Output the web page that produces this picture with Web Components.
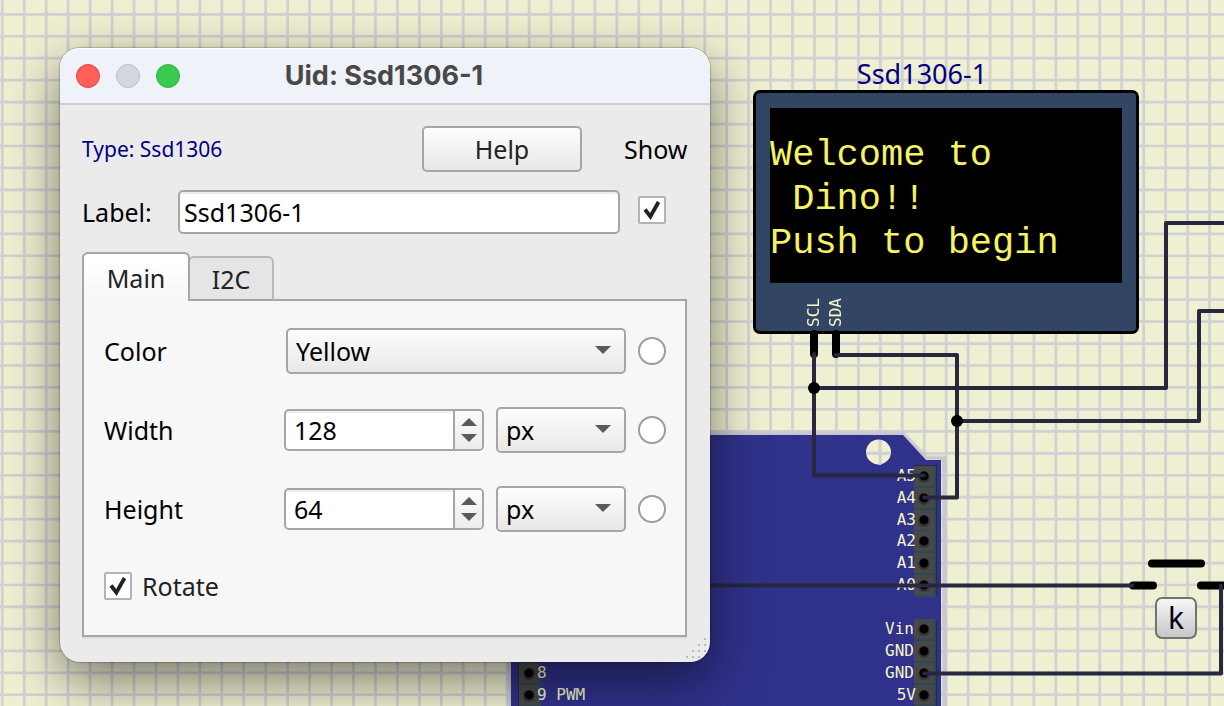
<!DOCTYPE html>
<html lang="en">
<head>
<meta charset="utf-8">
<title>Circuit editor</title>
<style>
  html, body { margin: 0; height: 100%; }
  body { overflow: hidden; font-family: "Noto Sans", "Open Sans", sans-serif; font-size: 25px; color: #000; --edge: #a6a6a6; }
  oled-display { left: 753px; top: 60px; }
  uno-board { left: 506px; top: 430px; }
  push-key { left: 1155px; top: 597px; }
  property-dialog { left: 60px; top: 48px; }
</style>
</head>
<body>
<circuit-canvas>
  <uno-board></uno-board>
  <oled-display name="Ssd1306-1"></oled-display>
  <circuit-wires></circuit-wires>
  <push-key>k</push-key>
  <property-dialog heading="Uid: Ssd1306-1">
    <property-header></property-header>
    <tab-panel>
      <select-row label="Color" value="Yellow"></select-row>
      <number-row label="Width" value="128" unit="px"></number-row>
      <number-row label="Height" value="64" unit="px"></number-row>
      <check-box label="Rotate"></check-box>
    </tab-panel>
  </property-dialog>
</circuit-canvas>

<script>
const define = (name, render, setup) => customElements.define(name, class extends HTMLElement {
  connectedCallback() {
    if (this.shadowRoot) return;
    this.attachShadow({ mode: 'open' }).innerHTML = render(this);
    if (setup) setup(this.shadowRoot, this);
  }
});

const controls = `
  *, *::before { box-sizing: border-box; }
  input, select, button { font: inherit; color: inherit; margin: 0; outline: none; }
  .raised { background: linear-gradient(#fdfdfd, #e8e8e8); border: 2px solid var(--edge); border-radius: 5px; }
  .sunken { background: #fff; border: 2px solid var(--edge); border-radius: 5px; box-shadow: inset 0 2px #ededed; }
  .combo { position: relative; display: block; }
  .combo select { appearance: none; width: 100%; height: 46px; padding: 0 8px; display: block; }
  .combo svg { position: absolute; right: 15px; top: 18px; pointer-events: none; }
  input[type=radio] { appearance: none; width: 28px; height: 28px; border: 2px solid #9d9d9d; border-radius: 50%; background: #fff; }
  input[type=checkbox] { appearance: none; flex: none; width: 28px; height: 28px; border: 2px solid #b4b4b4; border-radius: 2px; background: #fff; display: grid; place-content: center; }
  .tick { position: relative; display: grid; }
  .tick svg { position: absolute; inset: 0; pointer-events: none; }
  .tick input:not(:checked) + svg { display: none; }
`;
const down = '<svg width="16" height="9" aria-hidden="true"><path d="M0 0h16L8 8z" fill="#5a5a5a"/></svg>';
const up = '<svg width="16" height="9" aria-hidden="true"><path d="M0 8h16L8 0z" fill="#5a5a5a"/></svg>';
const tick = '<svg width="28" height="28" aria-hidden="true"><path d="M7 13.500L12.4 20.500L20.5 6" fill="none" stroke="#222" stroke-width="3.8"/></svg>';

/* Schematic sheet: grid lines every 439/20 px */
define('circuit-canvas', () => `
  <style>
    :host { display: block; position: relative; width: 100%; height: 100vh; overflow: hidden; background: #efefd1; }
    svg { position: absolute; inset: 0; width: 100%; height: 100%; }
    ::slotted(*) { position: absolute; }
  </style>
  <svg aria-hidden="true"><path fill="none" stroke="#d1d0d3" stroke-width="2.7"/></svg>
  <slot></slot>`, root => {
  const pitch = 439 / 20, w = screen.width + 2000, h = screen.height + 2000;
  let d = '';
  for (let x = 2.3; x < w; x += pitch) d += `M${x} 0V${h}`;
  for (let y = 14.3; y < h; y += pitch) d += `M0 ${y}H${w}`;
  root.querySelector('path').setAttribute('d', d);
});

define('circuit-wires', () => `
  <style>
    :host { display: block; inset: 0; pointer-events: none; }
    svg { width: 100%; height: 100%; display: block; }
  </style>
  <svg fill="none" stroke-linecap="round" aria-hidden="true">
    <path stroke="#000" stroke-width="8" d="M814 334V354M836 334V354M1133 585.5H1153M1201 585.5H1240M1152 563.5H1201"/>
    <g stroke="#27273d" stroke-width="4" stroke-linejoin="round">
      <path d="M814 354V475.5H924M814 388H1166V223H2400"/>
      <path d="M836 355H957V497.5H924M957 421H1199V311H2400"/>
      <path d="M600 585.5H1132M924 673.5H1221V585.5"/>
    </g>
    <g fill="#000"><circle cx="814" cy="388" r="6"/><circle cx="957" cy="421" r="6"/></g>
  </svg>`);

define('push-key', () => `
  <style>
    :host { display: block; }
    button { display: grid; place-content: center; width: 42px; height: 42px; padding: 0; font: inherit; font-size: 30px; line-height: 36px; color: #000014;
      background: linear-gradient(#f7f7f7, #c6c6c6); border: 2px solid #737373; border-radius: 7px; box-sizing: border-box; }
  </style>
  <button type="button"><slot></slot></button>`);

define('oled-display', el => `
  <style>
    :host { display: grid; justify-items: center; width: 386px; }
    .name { color: #000080; font-size: 27px; line-height: 28px; padding-bottom: 2px; margin-right: 48px; }
    .case { box-sizing: border-box; width: 100%; height: 244px; border: 3px solid #000; border-radius: 7px; background: #324563; padding: 15px 14px; }
    .screen { margin: 0; height: 175px; padding-top: 25px; box-sizing: border-box; background: #000; color: #f5f263; font: 37px/44px "Liberation Mono", monospace; overflow: hidden; }
    .pins { display: flex; gap: 2px; padding: 13px 0 0 34px; font: 16px/20px "DejaVu Sans Mono", monospace; color: #f5f5cd; }
    .pins span { writing-mode: vertical-rl; transform: rotate(180deg); height: 31px; text-align: left; }
  </style>
  <div class="name">${el.getAttribute('name')}</div>
  <div class="case">
    <pre class="screen">Welcome to
 Dino!!
Push to begin</pre>
    <div class="pins"><span>SCL</span><span>SDA</span></div>
  </div>`);

define('uno-board', () => {
  const right = [['A5', 46], ['A4', 68], ['A3', 90], ['A2', 111], ['A1', 133], ['A0', 155], ['Vin', 199], ['GND', 221], ['GND', 243], ['5V', 265]];
  const left = [['8', 243], ['9 PWM', 265]];
  const socket = (x, y) => `<path d="M${x - 10} ${y - 10}h20v20h-20z" fill="#484848"/><path d="M${x - 10} ${y + 11}h21v-21" fill="none" stroke="#2c535c" stroke-width="1.5"/><circle cx="${x}" cy="${y + 1}" r="6" fill="#363636"/><circle cx="${x}" cy="${y}" r="4.500" fill="#000"/>`;
  return `
  <style>:host { display: block; } svg { display: block; font: 16px "DejaVu Sans Mono", monospace; }</style>
  <svg width="450" height="400">
    <defs><filter id="soft" x="-5%" y="-5%" width="110%" height="110%"><feGaussianBlur stdDeviation="1"/></filter></defs>
    <path d="M4 500V4H397L420 28H438V500" fill="none" stroke="#c4c4d0" stroke-width="4" filter="url(#soft)"/>
    <path fill-rule="evenodd" fill="#30318a" d="M5 400V5H397L420 30H435V400ZM360 22A12.500 12.500 0 1 0 385 22A12.500 12.500 0 1 0 360 22Z"/>
    <path d="M374 10v25M361 23h24" stroke="#d1d0d3" stroke-width="2.700"/>
    <path d="M408 35h23v131h-23zM408 191h23v209h-23z" fill="#29293d"/>
    <path d="M12 233h22v167H12z" fill="#29293d"/>
    ${right.map(([, y]) => socket(418, y)).join('')}
    ${left.map(([, y]) => socket(23, y)).join('')}
    <g fill="#f5f5c8">
      ${right.map(([t, y]) => `<text x="${t.length === 3 ? 408 : 410}" y="${y + 5}" text-anchor="end">${t}</text>`).join('')}
      ${left.map(([t, y]) => `<text x="31" y="${y + 5}">${t}</text>`).join('')}
    </g>
  </svg>`;
});

define('property-dialog', el => `
  <style>
    :host { display: block; width: 650px; background: #ebebeb; border-radius: 20px; box-sizing: border-box;
      box-shadow: 0 0 1px 1px #0003, 0 18px 52px #00000080; }
    header { display: grid; grid-template-columns: 1fr auto 1fr; align-items: center; height: 57px; box-sizing: border-box; padding: 0 18px 0 16px;
      background: #eff2f8; border-bottom: 2px solid #cbcdd1; border-radius: 20px 20px 0 0; box-shadow: inset 0 1px #fff; }
    .lights { display: flex; gap: 16px; }
    .lights button { width: 24px; height: 24px; padding: 0; border-radius: 50%; border: 1px solid #e2463f; background: #ff5f58; }
    .lights button:nth-child(2) { border-color: #bcbfc4; background: #d4d7db; }
    .lights button:nth-child(3) { border-color: #2eb244; background: #3ac94f; }
    h1 { margin: 0; font: bold 27px/30px Inter, sans-serif; color: #484848; }
    main { padding: 21px 23px 25px 22px; }
    .grip { position: absolute; right: 4px; bottom: 4px; }
  </style>
  <header>
    <div class="lights"><button type="button" aria-label="Close"></button><button type="button" aria-label="Minimize"></button><button type="button" aria-label="Zoom"></button></div>
    <h1>${el.getAttribute('heading')}</h1>
  </header>
  <main><slot></slot></main>
  <svg class="grip" width="20" height="20" aria-hidden="true"><path fill="#b9b9b9" d="M18 0h2v2h-2zM12 6h2v2h-2zM18 6h2v2h-2zM6 12h2v2H6zM12 12h2v2h-2zM18 12h2v2h-2zM0 18h2v2H0zM6 18h2v2H6zM12 18h2v2h-2z"/></svg>`);

define('property-header', () => `
  <style>${controls}
    :host { display: grid; gap: 18px; margin-bottom: 18px; }
    .row { display: flex; align-items: center; }
    .type { flex: 1; font-size: 21px; color: #000080; }
    .help { width: 160px; height: 46px; padding: 0; color: #222; margin-right: 42px; }
    .show { width: 63px; white-space: nowrap; }
    .label { width: 96px; }
    .name { flex: 1; min-width: 0; height: 44px; padding: 0 4px; margin-right: 18px; }
    .tick { margin: 0 21px 4px 0; }
  </style>
  <div class="row"><span class="type">Type: Ssd1306</span><button class="raised help" type="button">Help</button><label class="show" for="show">Show</label></div>
  <div class="row"><label class="label" for="name">Label:</label><input class="sunken name" id="name" value="Ssd1306-1"><span class="tick"><input type="checkbox" id="show" checked>${tick}</span></div>`);

define('tab-panel', () => `
  <style>
    :host { display: block; }
    * { box-sizing: border-box; }
    nav { display: flex; align-items: flex-end; height: 49px; margin-bottom: -2px; position: relative; }
    button { font: inherit; color: #222; margin: 0; padding: 0; border: 2px solid #b9b9b9; border-radius: 6px 6px 0 0; background: #e5e5e5; height: 45px; width: 86px; margin-left: -2px; border-bottom-color: var(--edge); }
    button:first-child { width: 108px; height: 49px; margin: 0; border-color: var(--edge); border-bottom: 0; background: linear-gradient(#fff, #f7f7f7); z-index: 1; }
    section { display: grid; grid-template-columns: minmax(0, 1fr); gap: 33px; padding: 27px 19px 28px 20px; background: #f7f7f7; border: 2px solid var(--edge); box-shadow: 0 2px #dedede; }
  </style>
  <nav role="tablist"><button role="tab" aria-selected="true">Main</button><button role="tab" aria-selected="false">I2C</button></nav>
  <section role="tabpanel"><slot></slot></section>`);

const rowLayout = `
  :host { display: grid; grid-template-columns: 180px minmax(0, 1fr) 28px; align-items: center; }
  label { line-height: 46px; }
`;

define('select-row', el => `
  <style>${controls}${rowLayout}
    .combo { margin: 0 12px 0 2px; }
  </style>
  <label for="field">${el.getAttribute('label')}</label>
  <span class="combo"><select class="raised" id="field"><option>${el.getAttribute('value')}</option></select>${down}</span>
  <input type="radio" aria-label="Show ${el.getAttribute('label')}">`);

define('number-row', el => `
  <style>${controls}${rowLayout}
    .fields { display: flex; align-items: center; gap: 12px; margin-right: 12px; }
    .spin { flex: 1; min-width: 0; display: flex; height: 42px; overflow: hidden; }
    .spin input { flex: 1; min-width: 0; border: 0; background: none; padding: 0 8px; appearance: textfield; }
    input::-webkit-inner-spin-button { appearance: none; margin: 0; }
    .steps { display: grid; grid-template-rows: 1fr 1fr; width: 29px; border-left: 2px solid var(--edge); background: linear-gradient(#fbfbfb, #ececec); }
    .steps button { display: grid; justify-content: center; align-content: end; border: 0; padding: 0 0 3px; background: none; }
    .steps button + button { align-content: start; padding: 4px 0 0; }
    .combo { width: 130px; }
  </style>
  <label for="field">${el.getAttribute('label')}</label>
  <div class="fields">
    <div class="spin sunken"><input type="number" id="field" value="${el.getAttribute('value')}"><div class="steps"><button type="button" aria-label="Increase">${up}</button><button type="button" aria-label="Decrease">${down}</button></div></div>
    <span class="combo"><select class="raised" aria-label="${el.getAttribute('label')} unit"><option>${el.getAttribute('unit')}</option></select>${down}</span>
  </div>
  <input type="radio" aria-label="Show ${el.getAttribute('label')}">`, root => {
  const field = root.getElementById('field');
  const [inc, dec] = root.querySelectorAll('button');
  inc.onclick = () => field.stepUp();
  dec.onclick = () => field.stepDown();
});

define('check-box', el => `
  <style>${controls}
    :host { display: flex; align-items: center; gap: 10px; line-height: 42px; color: #222; }
  </style>
  <span class="tick"><input type="checkbox" id="box" checked>${tick}</span><label for="box">${el.getAttribute('label')}</label>`);
</script>
</body>
</html>
